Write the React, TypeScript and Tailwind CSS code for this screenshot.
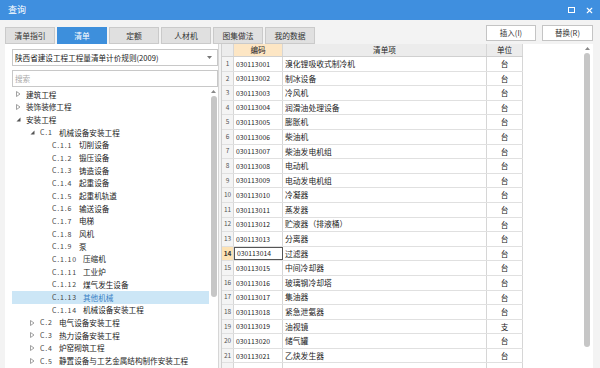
import { X } from 'lucide-react'

const tabs = ['清单指引', '清单', '定额', '人材机', '图集做法', '我的数据']

type Node = { code?: string; name: string; level: number; arrow?: 'open' | 'closed'; active?: boolean }

const tree: Node[] = [
  { name: '建筑工程', level: 0, arrow: 'closed' },
  { name: '装饰装修工程', level: 0, arrow: 'closed' },
  { name: '安装工程', level: 0, arrow: 'open' },
  { code: 'C.1', name: '机械设备安装工程', level: 1, arrow: 'open' },
  { code: 'C.1.1', name: '切削设备', level: 2 },
  { code: 'C.1.2', name: '锻压设备', level: 2 },
  { code: 'C.1.3', name: '铸造设备', level: 2 },
  { code: 'C.1.4', name: '起重设备', level: 2 },
  { code: 'C.1.5', name: '起重机轨道', level: 2 },
  { code: 'C.1.6', name: '输送设备', level: 2 },
  { code: 'C.1.7', name: '电梯', level: 2 },
  { code: 'C.1.8', name: '风机', level: 2 },
  { code: 'C.1.9', name: '泵', level: 2 },
  { code: 'C.1.10', name: '压缩机', level: 2 },
  { code: 'C.1.11', name: '工业炉', level: 2 },
  { code: 'C.1.12', name: '煤气发生设备', level: 2 },
  { code: 'C.1.13', name: '其他机械', level: 2, active: true },
  { code: 'C.1.14', name: '机械设备安装工程', level: 2 },
  { code: 'C.2', name: '电气设备安装工程', level: 1, arrow: 'closed' },
  { code: 'C.3', name: '热力设备安装工程', level: 1, arrow: 'closed' },
  { code: 'C.4', name: '炉窑砌筑工程', level: 1, arrow: 'closed' },
  { code: 'C.5', name: '静置设备与工艺金属结构制作安装工程', level: 1, arrow: 'closed' },
]

const rows: [string, string, string][] = [
  ['030113001', '溴化锂吸收式制冷机', '台'],
  ['030113002', '制冰设备', '台'],
  ['030113003', '冷风机', '台'],
  ['030113004', '润滑油处理设备', '台'],
  ['030113005', '膨胀机', '台'],
  ['030113006', '柴油机', '台'],
  ['030113007', '柴油发电机组', '台'],
  ['030113008', '电动机', '台'],
  ['030113009', '电动发电机组', '台'],
  ['030113010', '冷凝器', '台'],
  ['030113011', '蒸发器', '台'],
  ['030113012', '贮液器（排液桶）', '台'],
  ['030113013', '分离器', '台'],
  ['030113014', '过滤器', '台'],
  ['030113015', '中间冷却器', '台'],
  ['030113016', '玻璃钢冷却塔', '台'],
  ['030113017', '集油器', '台'],
  ['030113018', '紧急泄氨器', '台'],
  ['030113019', '油视镜', '支'],
  ['030113020', '储气罐', '台'],
  ['030113021', '乙炔发生器', '台'],
  ['', '', ''],
]

function Arrow({ kind }: { kind: 'open' | 'closed' }) {
  if (kind === 'closed') {
    return (
      <svg width="5" height="6" viewBox="0 0 5 6">
        <path d="M0.5 0.5 L4 3 L0.5 5.5 Z" fill="#ffffff" stroke="#8a8a8a" strokeWidth="0.8" />
      </svg>
    )
  }
  return (
    <svg width="5" height="5" viewBox="0 0 5 5">
      <path d="M4.5 0.5 L4.5 4.5 L0.5 4.5 Z" fill="#555555" />
    </svg>
  )
}

function TreeRow({ n }: { n: Node }) {
  const pad = n.level === 0 ? 'pl-[4px]' : n.level === 1 ? 'pl-[18px]' : 'pl-[30px]'
  const codeW = n.level === 1 ? 'w-[19px]' : n.code && n.code.length > 5 ? 'w-[31px]' : 'w-[27px]'
  return (
    <div
      className={`h-[12.7px] flex items-center ${pad} ${n.active ? 'bg-[#cce6f6] text-[#3a7fc4]' : 'text-[#222]'}`}
    >
      <div className="w-[10px] flex items-center">{n.arrow && <Arrow kind={n.arrow} />}</div>
      {n.code && <span className={`${codeW} text-[7px] tracking-[0.8px] text-[#444]`}>{n.code}</span>}
      <span className="text-[7.6px] leading-none whitespace-nowrap">{n.name}</span>
    </div>
  )
}

export default function App() {
  return (
    <div className="w-[600px] h-[368px] overflow-hidden bg-[#f3f3f3] font-['Noto_Sans_CJK_SC',sans-serif] flex flex-col">
      {/* 标题栏 */}
      <div className="h-[20px] bg-[#3f8fdf] flex items-center justify-between pl-[8px] pr-[6px] shrink-0">
        <span className="text-white text-[9px]">查询</span>
        <div className="flex items-center gap-[10px]">
          <div className="w-[7px] h-[6px] border-[1.5px] border-white" />
          <X size={9} strokeWidth={3} className="text-white" />
        </div>
      </div>

      {/* 页签 + 按钮 */}
      <div className="h-[24px] flex items-end justify-between pl-[5px] pr-[7px] shrink-0">
        <div className="flex gap-[2px] h-[17px]">
          {tabs.map((t) => (
            <div
              key={t}
              className={`w-[50px] flex items-center justify-center text-[7.8px] border ${
                t === '清单' ? 'bg-[#3d8fdc] border-[#3d8fdc] text-white' : 'bg-[#e0e0e0] border-[#cacaca] text-[#333]'
              }`}
            >
              {t}
            </div>
          ))}
        </div>
        <div className="flex gap-[6px] self-start mt-[5px]">
          <div className="w-[50px] h-[16px] bg-white border border-[#c4c4c4] flex items-center justify-center text-[7.5px] text-[#333]">插入(I)</div>
          <div className="w-[51px] h-[16px] bg-white border border-[#c4c4c4] flex items-center justify-center text-[7.5px] text-[#333]">替换(R)</div>
        </div>
      </div>

      <div className="flex-1 flex min-h-0">
        {/* 左侧 */}
        <div className="w-[214px] ml-[5px] bg-white border-r border-[#d6d6d6] flex flex-col pl-[7px] pt-[5px] min-h-0">
          <div className="h-[17px] border border-[#c8c8c8] flex items-center justify-between pl-[2px] pr-[5px] text-[7.6px] text-[#222]">
            <span>陕西省建设工程工程量清单计价规则(2009)</span>
            <svg width="5" height="3" viewBox="0 0 5 3"><path d="M0 0 L5 0 L2.5 3 Z" fill="#777" /></svg>
          </div>
          <div className="h-[17px] mt-[4px] border border-[#c8c8c8] flex items-center pl-[2px] text-[7.6px] text-[#aaa]">搜索</div>
          <div className="flex-1 flex min-h-0 mt-[1px]">
            <div className="flex-1 overflow-hidden">
              {tree.map((n, i) => (
                <TreeRow key={i} n={n} />
              ))}
            </div>
            <div className="w-[9px] flex flex-col items-center pt-[2px]">
              <svg width="5" height="3" viewBox="0 0 5 3"><path d="M0 3 L5 3 L2.5 0 Z" fill="#888" /></svg>
              <div className="w-[6px] h-[201px] mt-[3px] bg-[#c6c6c6] rounded-[3px]" />
            </div>
          </div>
        </div>

        {/* 右侧表格 */}
        <div className="flex-1 ml-[2px] mr-[7px] bg-white border-l border-[#d0d0d0] flex min-h-0">
          <div className="w-[301px] flex flex-col">
            <div className="h-[13px] flex shrink-0 border-b border-[#d0d0d0] text-[7.6px] text-[#222]">
              <div className="w-[12px] bg-[#ececec] border-r border-[#d6d6d6]" />
              <div className="w-[49px] bg-[#fde6c4] border-r border-[#d6d6d6] flex items-center justify-center">编码</div>
              <div className="w-[204px] bg-[#ececec] border-r border-[#d6d6d6] flex items-center justify-center">清单项</div>
              <div className="w-[36px] bg-[#ececec] border-r border-[#d6d6d6] flex items-center justify-center">单位</div>
            </div>
            {rows.map((r, i) => {
              const sel = i === 13
              return (
                <div key={i} className="h-[14.6px] flex shrink-0 border-b border-[#e0e0e0] text-[#222]">
                  <div
                    className={`w-[12px] border-r border-[#d6d6d6] flex items-center justify-center text-[6.5px] ${
                      sel ? 'bg-[#fde2b4] font-bold text-[#333]' : 'bg-[#f4f4f4] text-[#555]'
                    }`}
                  >
                    {r[0] ? i + 1 : ''}
                  </div>
                  <div
                    className={`w-[49px] flex items-center pl-[2px] text-[6.8px] ${
                      sel ? 'border border-[#555]' : 'border-r border-[#d6d6d6]'
                    }`}
                  >
                    {r[0]}
                  </div>
                  <div className="w-[204px] border-r border-[#d6d6d6] flex items-center pl-[2px] text-[7.8px] whitespace-nowrap">{r[1]}</div>
                  <div className="w-[36px] border-r border-[#d6d6d6] flex items-center justify-center text-[7.6px]">{r[2]}</div>
                </div>
              )
            })}
          </div>
          <div className="flex-1" />
          <div className="w-[10px] flex flex-col items-center pt-[3px] mr-[1px]">
            <svg width="5" height="3" viewBox="0 0 5 3"><path d="M0 3 L5 3 L2.5 0 Z" fill="#888" /></svg>
            <div className="w-[6px] h-[294px] mt-[3px] bg-[#c6c6c6] rounded-[3px]" />
          </div>
        </div>
      </div>
    </div>
  )
}
